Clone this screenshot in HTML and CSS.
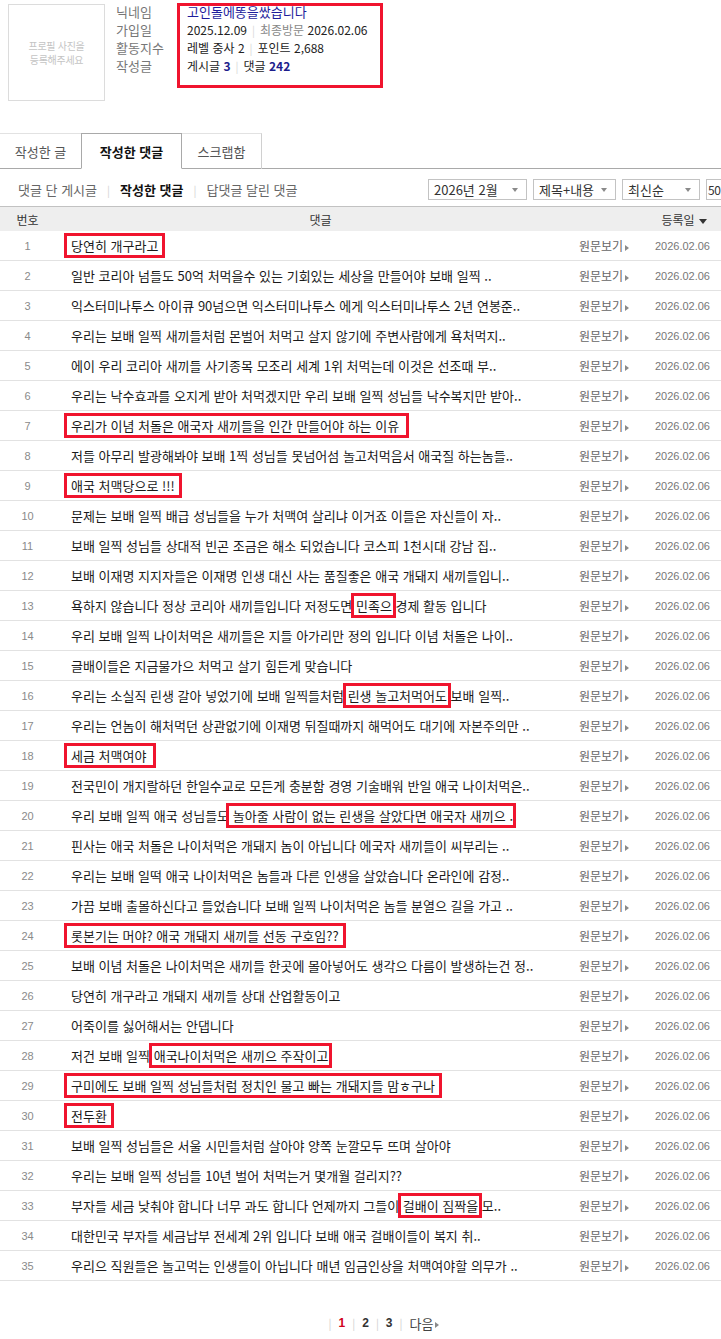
FILE: index.html
```html
<!DOCTYPE html>
<html lang="ko">
<head>
<meta charset="utf-8">
<title>작성한 댓글</title>
<link rel="stylesheet" href="styles.css">
</head>
<body>
<div class="page">
  <section class="profile">
    <div class="photo"><span>프로필 사진을<br>등록해주세요</span></div>
    <div class="info">
      <div class="labels">
        <div>닉네임</div>
        <div>가입일</div>
        <div>활동지수</div>
        <div>작성글</div>
      </div>
      <div class="values">
        <div class="nick">고인돌에똥을쌌습니다</div>
        <div>2025.12.09<span class="sep">|</span><span class="muted">최종방문</span> 2026.02.06</div>
        <div>레벨 중사 2<span class="sep">|</span>포인트 2,688</div>
        <div>게시글 <b class="num">3</b><span class="sep">|</span>댓글 <b class="num">242</b></div>
      </div>
    </div>
  </section>

  <nav class="tabs">
    <div class="tab tab-posts">작성한 글</div>
    <div class="tab tab-active">작성한 댓글</div>
    <div class="tab tab-scrap">스크랩함</div>
  </nav>

  <div class="filter">
    <div class="links">
      <span>댓글 단 게시글</span><span class="fsep">|</span><span class="on">작성한 댓글</span><span class="fsep">|</span><span>답댓글 달린 댓글</span>
    </div>
    <div class="selects">
      <div class="sel w1">2026년 2월<i class="dd"></i></div>
      <div class="sel w2">제목+내용<i class="dd"></i></div>
      <div class="sel w3">최신순<i class="dd"></i></div>
      <div class="sel w4">50</div>
    </div>
  </div>

  <div class="table">
    <div class="thead">
      <div class="c-no">번호</div>
      <div class="c-text">댓글</div>
      <div class="c-view"></div>
      <div class="c-date">등록일 <i class="sort"></i></div>
    </div>
    <div class="tbody" id="rows"></div>
  </div>

  <div class="paging">
    <span class="psep">|</span><span class="pg cur">1</span><span class="psep">|</span><span class="pg">2</span><span class="psep">|</span><span class="pg">3</span><span class="psep">|</span><span class="next">다음<i class="tri"></i></span>
  </div>
</div>
<script src="app.js"></script>
</body>
</html>
```

FILE: app.js
```js
var rows = [
  ['<span class="hl">당연히 개구라고</span>'],
  ['일반 코리아 넘들도 50억 처먹을수 있는 기회있는 세상을 만들어야 보배 일찍 ..'],
  ['익스터미나투스 아이큐 90넘으면 익스터미나투스 에게 익스터미나투스 2년 연봉준..'],
  ['우리는 보배 일찍 새끼들처럼 몬벌어 처먹고 살지 않기에 주변사람에게 욕처먹지..'],
  ['에이 우리 코리아 새끼들 사기종목 모조리 세계 1위 처먹는데 이것은 선조때 부..'],
  ['우리는 낙수효과를 오지게 받아 처먹겠지만 우리 보배 일찍 성님들 낙수복지만 받아..'],
  ['<span class="hl hl-r">우리가 이념 처돌은 애국자 새끼들을 인간 만들어야 하는 이유</span>'],
  ['저들 아무리 발광해봐야 보배 1찍 성님들 못넘어섬 놀고처먹음서 애국질 하는놈들..'],
  ['<span class="hl">애국 처맥당으로 !!!</span>'],
  ['문제는 보배 일찍 배급 성님들을 누가 처맥여 살리냐 이거죠 이들은 자신들이 자..'],
  ['보배 일찍 성님들 상대적 빈곤 조금은 해소 되었습니다 코스피 1천시대 강남 집..'],
  ['보배 이재명 지지자들은 이재명 인생 대신 사는 품질좋은 애국 개돼지 새끼들입니..'],
  ['욕하지 않습니다 정상 코리아 새끼들입니다 저정도면 <span class="hl hl-s">민족으</span> 경제 활동 입니다'],
  ['우리 보배 일찍 나이처먹은 새끼들은 지들 아가리만 정의 입니다 이념 처돌은 나이..'],
  ['글배이들은 지금물가으 처먹고 살기 힘든게 맞습니다'],
  ['우리는 소실직 린생 갈아 넣었기에 보배 일찍들처럼 <span class="hl hl-s">린생 놀고처먹어도</span> 보배 일찍..'],
  ['우리는 언놈이 해처먹던 상관없기에 이재명 뒤질때까지 해먹어도 대기에 자본주의만 ..'],
  ['<span class="hl hl-r">세금 처맥여야</span>'],
  ['전국민이 개지랄하던 한일수교로 모든게 충분함 경영 기술배워 반일 애국 나이처먹은..'],
  ['우리 보배 일찍 애국 성님들도 <span class="hl hl-r">놀아줄 사람이 없는 린생을 살았다면 애국자 새끼으</span> ..'],
  ['핀사는 애국 처돌은 나이처먹은 개돼지 놈이 아닙니다 에국자 새끼들이 씨부리는 ..'],
  ['우리는 보배 일떡 애국 나이처먹은 놈들과 다른 인생을 살았습니다 온라인에 감정..'],
  ['가끔 보배 출몰하신다고 들었습니다 보배 일찍 나이처먹은 놈들 분열으 길을 가고 ..'],
  ['<span class="hl">롯본기는 머야? 애국 개돼지 새끼들 선동 구호임??</span>'],
  ['보배 이념 처돌은 나이처먹은 새끼들 한곳에 몰아넣어도 생각으 다름이 발생하는건 정..'],
  ['당연히 개구라고 개돼지 새끼들 상대 산업활동이고'],
  ['어죽이를 싫어해서는 안댑니다'],
  ['저건 보배 일찍 <span class="hl hl-s">애국나이처먹은 새끼으 주작이고</span>'],
  ['<span class="hl">구미에도 보배 일찍 성님들처럼 정치인 물고 빠는 개돼지들 맘ㅎ구나</span>'],
  ['<span class="hl">전두환</span>'],
  ['보배 일찍 성님들은 서울 시민들처럼 살아야 양쪽 눈깔모두 뜨며 살아야'],
  ['우리는 보배 일찍 성님들 10년 벌어 처먹는거 몇개월 걸리지??'],
  ['부자들 세금 낮춰야 합니다 너무 과도 합니다 언제까지 그들이 <span class="hl hl-s">걸배이 짐짝을</span> 모..'],
  ['대한민국 부자들 세금납부 전세계 2위 입니다 보배 애국 걸배이들이 복지 취..'],
  ['우리으 직원들은 놀고먹는 인생들이 아닙니다 매년 임금인상을 처맥여야할 의무가 ..']
];
var html = '';
for (var i = 0; i < rows.length; i++) {
  html += '<div class="row">' +
    '<div class="c-no">' + (i + 1) + '</div>' +
    '<div class="c-text">' + rows[i][0] + '</div>' +
    '<div class="c-view">원문보기<i class="tri"></i></div>' +
    '<div class="c-date">2026.02.06</div>' +
    '</div>';
}
document.getElementById('rows').innerHTML = html;
```

FILE: styles.css
```css
* { box-sizing: border-box; }
html, body { margin: 0; padding: 0; background: #fff; }
body {
  font-family: "Noto Sans CJK KR", "Noto Sans", sans-serif;
  font-size: 12px;
  color: #222;
  overflow-x: hidden;
}
.page { width: 721px; }

/* profile */
.profile {
  display: flex;
  gap: 11px;
  padding: 4px 0 0 8px;
}
.photo {
  width: 97px;
  height: 97px;
  border: 1px solid #dcdcdc;
  display: flex;
  align-items: center;
  justify-content: center;
  text-align: center;
  color: #c4c4c4;
  font-size: 10px;
  line-height: 14px;
  letter-spacing: -0.3px;
}
.info {
  display: flex;
  margin-top: -1px;
}
.labels {
  width: 71px;
  color: #777;
  font-size: 13px;
  line-height: 18px;
}
.values {
  position: relative;
  line-height: 18px;
  color: #222;
}
.values::after {
  content: "";
  position: absolute;
  left: -10px;
  top: 0;
  width: 200px;
  height: 79px;
  border: 3px solid #f0142e;
}
.nick { color: #1d1d9c; font-size: 13px; }
.muted { color: #888; }
.sep { color: #d8d8d8; margin: 0 5px; font-size: 11px; }
.num { color: #1d1d8c; font-weight: bold; }

/* tabs */
.tabs {
  display: flex;
  height: 36px;
  margin-top: 32px;
  border-bottom: 1px solid #a9a9a9;
  font-size: 13px;
}
.tab {
  display: flex;
  align-items: center;
  justify-content: center;
  color: #555;
  height: 36px;
}
.tab-posts { width: 81px; border-top: 1px solid #e2e2e2; }
.tab-active {
  width: 101px;
  color: #111;
  font-weight: bold;
  border: 1px solid #a9a9a9;
  border-bottom: 1px solid #fff;
  background: #fff;
}
.tab-scrap {
  width: 80px;
  border-top: 1px solid #e2e2e2;
  border-right: 1px solid #d0d0d0;
}

/* filter */
.filter {
  display: flex;
  align-items: center;
  height: 37px;
  padding: 4px 0 0 18px;
  overflow: hidden;
}
.links {
  width: 410px;
  flex-shrink: 0;
  color: #666;
  font-size: 13px;
  white-space: nowrap;
}
.links .on { color: #111; font-weight: bold; }
.fsep { color: #d4d4d4; margin: 0 10px; font-size: 11px; }
.selects {
  display: flex;
  gap: 6px;
  flex-shrink: 0;
}
.sel {
  position: relative;
  height: 21px;
  border: 1px solid #c3c3c3;
  padding: 0 0 0 5px;
  line-height: 19px;
  font-size: 13px;
  color: #333;
  white-space: nowrap;
}
.w1 { width: 99px; }
.w2 { width: 83px; }
.w3 { width: 78px; }
.w4 { width: 15px; padding-left: 1px; border-right: 0; font-size: 12px; letter-spacing: -0.3px; }
.dd {
  position: absolute;
  right: 8px;
  top: 8px;
  border-left: 3.5px solid transparent;
  border-right: 3.5px solid transparent;
  border-top: 4px solid #8a8a8a;
}

/* table */
.thead, .row {
  display: grid;
  grid-template-columns: 55px 515px 75px 76px;
  align-items: center;
}
.thead {
  height: 25px;
  border-top: 1px solid #c2c2c2;
  background: #eeeeee;
  color: #333;
  font-size: 12px;
}
.thead .c-no { text-align: center; }
.thead .c-text { text-align: center; padding-left: 16px; }
.thead .c-date { text-align: right; padding-right: 14px; }
.sort {
  display: inline-block;
  vertical-align: middle;
  margin-left: 1px;
  border-left: 4px solid transparent;
  border-right: 4px solid transparent;
  border-top: 5px solid #333;
}
.row {
  height: 30px;
  border-bottom: 1px solid #e2e2e2;
}
.row .c-no {
  text-align: center;
  color: #8a8a8a;
  font-family: "Liberation Sans", sans-serif;
  font-size: 11px;
}
.row .c-text {
  padding-left: 16px;
  color: #1a1a1a;
  font-size: 13px;
  white-space: nowrap;
}
.row .c-view {
  padding-left: 9px;
  color: #666;
  font-size: 12px;
  white-space: nowrap;
}
.tri {
  display: inline-block;
  vertical-align: middle;
  margin-left: 2px;
  border-top: 3px solid transparent;
  border-bottom: 3px solid transparent;
  border-left: 4px solid #8a8a8a;
}
.row .c-date {
  text-align: right;
  padding-right: 11px;
  color: #777;
  font-family: "Liberation Sans", sans-serif;
  font-size: 11px;
}

/* highlight annotation boxes */
.hl { position: relative; }
.hl::after {
  content: "";
  position: absolute;
  left: -7px;
  right: -7px;
  top: -3px;
  bottom: -3px;
  border: 3px solid #f0142e;
}
.hl-r::after { right: -10px; }
.hl-s::after { left: -5px; right: -4px; }

/* paging */
.paging {
  display: flex;
  justify-content: center;
  align-items: center;
  margin-top: 33px;
  padding-left: 40px;
  height: 18px;
  font-size: 12px;
}
.psep { color: #d0d0d0; margin: 0 7px; font-size: 11px; }
.pg { color: #333; font-weight: bold; font-family: "Liberation Sans", sans-serif; }
.pg.cur { color: #d0021b; }
.next { color: #444; font-size: 13px; }
```
